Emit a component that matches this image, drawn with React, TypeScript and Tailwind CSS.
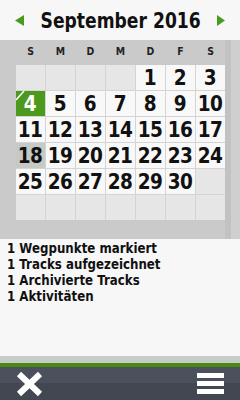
import React from "react";

const font = { fontFamily: '"DejaVu Sans", sans-serif' };

const days = ["S", "M", "D", "M", "D", "F", "S"];
const cells: (number | null)[] = [
  null, null, null, null, 1, 2, 3,
  4, 5, 6, 7, 8, 9, 10,
  11, 12, 13, 14, 15, 16, 17,
  18, 19, 20, 21, 22, 23, 24,
  25, 26, 27, 28, 29, 30, null,
  null, null, null, null, null, null, null,
];

const lines = ["1 Wegpunkte markiert", "1 Tracks aufgezeichnet", "1 Archivierte Tracks", "1 Aktivitäten"];

export default function App() {
  return (
    <div className="w-[240px] h-[400px] flex flex-col bg-[#f7f7f7] overflow-hidden" style={font}>
      <div className="h-[40px] flex items-center px-[15px] bg-[#f7f7f7]">
        <svg className="shrink-0" width="9" height="11" viewBox="0 0 9 11"><polygon points="9,0 9,11 0,5.5" fill="#4a9a1c" /></svg>
        <div className="flex-1 min-w-0 flex justify-center">
          <div className="text-[22px] font-bold text-[#111] leading-none whitespace-nowrap [transform:scaleX(0.78)] mt-[1px]">September 2016</div>
        </div>
        <svg className="shrink-0" width="8" height="11" viewBox="0 0 8 11"><polygon points="0,0 0,11 8,5.5" fill="#4a9a1c" /></svg>
      </div>
      <div className="h-[199px] bg-[#cacaca] flex">
        <div className="pl-[16px] flex flex-col">
          <div className="h-[25px] grid grid-cols-[repeat(7,29px)] gap-x-px items-center">
            {days.map((d, i) => (
              <div key={i} className="text-center text-[11px] font-bold text-[#222] [transform:scaleX(0.85)]">{d}</div>
            ))}
          </div>
          <div className="grid grid-cols-[repeat(7,29px)] grid-rows-[repeat(6,25px)] gap-px bg-[#d4d4d4]">
            {cells.map((n, i) => {
              if (n === null) return <div key={i} className="bg-[#e6e6e6]" />;
              const today = n === 4;
              const sel = n === 18;
              return (
                <div
                  key={i}
                  className={`relative flex items-center justify-center text-[21px] font-bold leading-none ${today ? "bg-[#4b9a1e] text-white" : sel ? "bg-[#c6c9c6] text-[#111]" : "bg-[#f8f8f8] text-[#111]"}`}
                >
                  {today && (
                    <svg className="absolute left-0 top-0" width="10" height="10" viewBox="0 0 10 10">
                      <line x1="0" y1="9" x2="8" y2="0" stroke="white" strokeWidth="1.5" />
                    </svg>
                  )}
                  <span className="mt-[1px] whitespace-nowrap [transform:scaleX(0.88)] tracking-[-0.5px]">{n}</span>
                </div>
              );
            })}
          </div>
        </div>
        <div className="ml-auto w-[15px] flex">
          <div className="w-[6px] bg-[#c2c2c2]" />
          <div className="flex-1 bg-[#cfcfcf]" />
        </div>
      </div>
      <div className="flex-1 pt-[1px] px-[7px] flex flex-col text-[14px] leading-[16px] font-bold text-[#111]">
        {lines.map((l) => (
          <div key={l} className="h-[16px] whitespace-nowrap origin-left [transform:scaleX(0.845)]">{l}</div>
        ))}
      </div>
      <div className="h-[7px] bg-[#c8ccc8]" />
      <div className="h-[4px] bg-[#4a8a12]" />
      <div className="h-[33px] flex flex-col relative">
        <div className="h-[16px] bg-[#4c505c]" />
        <div className="flex-1 bg-[#434752]" />
        <div className="absolute inset-0 flex items-center justify-between px-[16px]">
          <svg width="27" height="26" viewBox="0 0 27 26">
            <line x1="3" y1="3" x2="24" y2="23" stroke="white" strokeWidth="6" />
            <line x1="24" y1="3" x2="3" y2="23" stroke="white" strokeWidth="6" />
          </svg>
          <div className="flex flex-col gap-[3px] w-[27px]">
            <div className="h-[5px] bg-white" />
            <div className="h-[5px] bg-white" />
            <div className="h-[5px] bg-white" />
          </div>
        </div>
      </div>
    </div>
  );
}
